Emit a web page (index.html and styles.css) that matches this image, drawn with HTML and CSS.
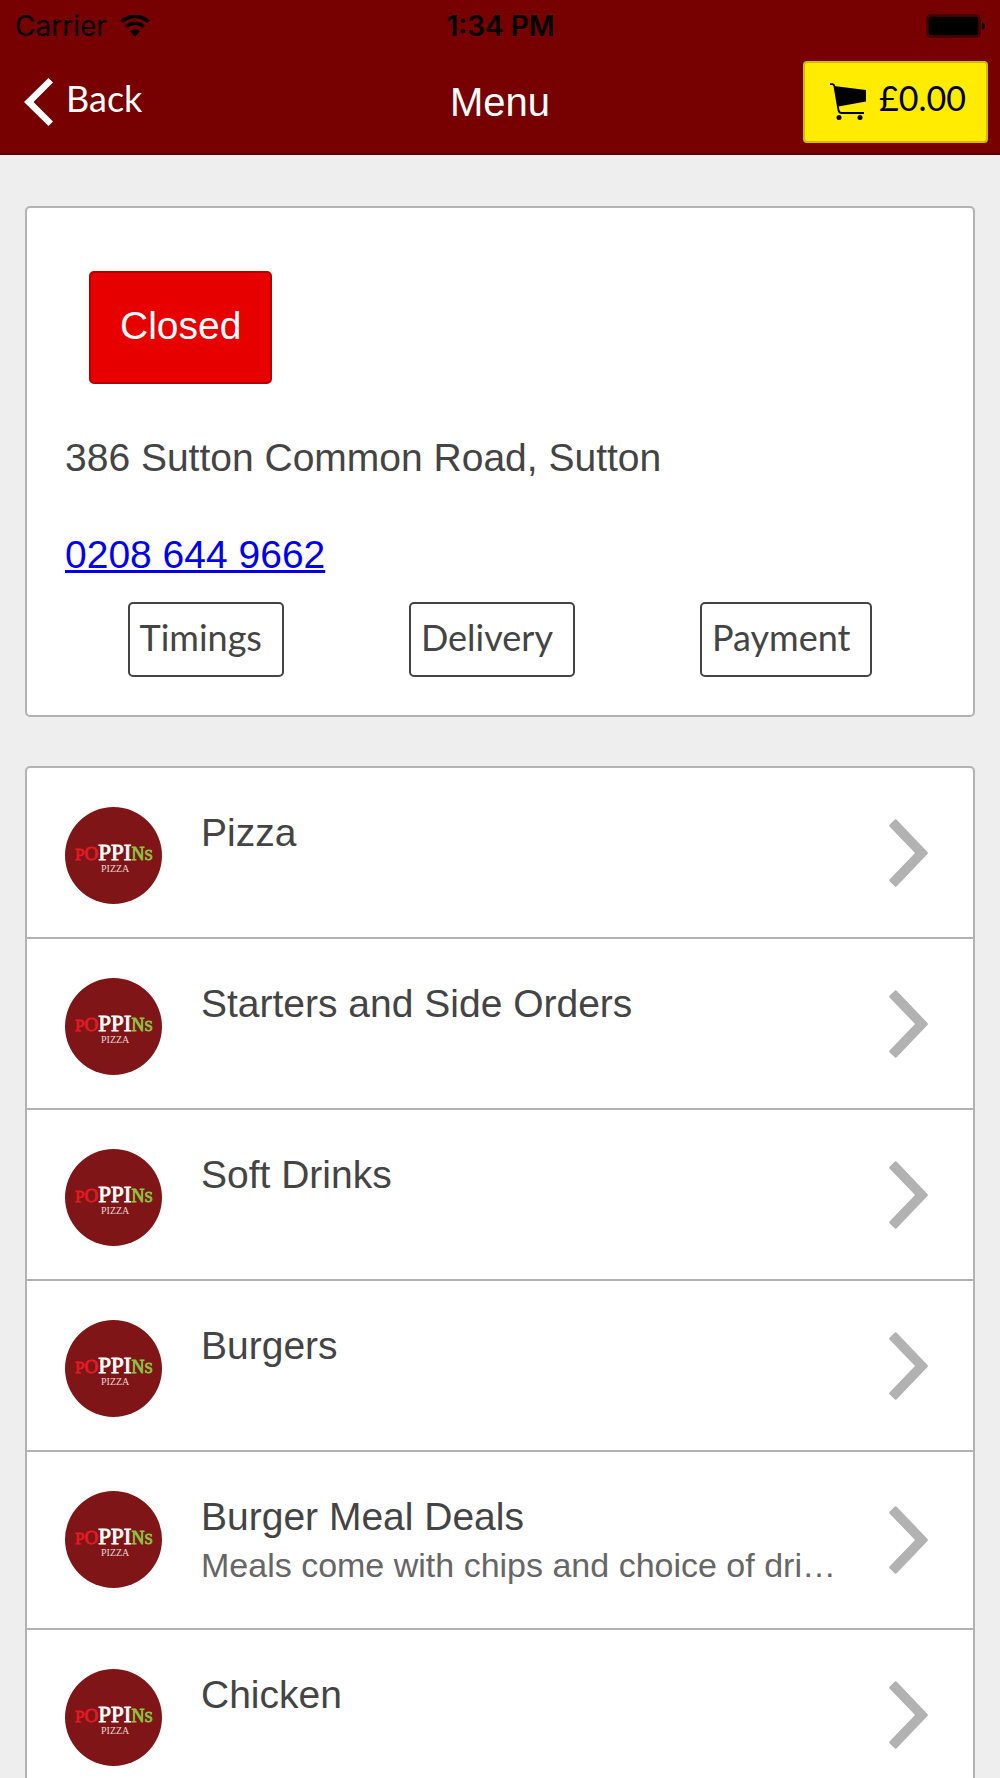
FILE: index.html
```html
<!DOCTYPE html>
<html lang="en">
<head>
  <meta charset="utf-8">
  <meta name="viewport" content="width=device-width, initial-scale=1">
  <title>Menu</title>
  <link rel="stylesheet" href="styles.css">
</head>
<body>
  <svg class="sprite" aria-hidden="true">
    <symbol id="logo" viewBox="0 0 97 97">
      <circle cx="48.5" cy="48.5" r="48.5" fill="#7f1517"/>
      <text x="10" y="53" font-family="Liberation Serif, serif" stroke-width="0.8"><tspan font-size="17" fill="#e31b23" stroke="#e31b23">P</tspan><tspan font-size="19" fill="#e31b23" stroke="#e31b23">O</tspan><tspan font-size="23" fill="#fff" stroke="#fff">PPI</tspan><tspan font-size="18" fill="#8cc63f" stroke="#8cc63f">N</tspan><tspan font-size="15" fill="#8cc63f" stroke="#8cc63f">S</tspan></text>
      <text x="36" y="65" font-family="Liberation Serif, serif" font-size="10" fill="#e8d5d5">PIZZA</text>
    </symbol>
    <symbol id="arrow" viewBox="0 0 39 68">
      <path d="M6.200 0.300Q7 0 7.700 0.700L38.500 33Q39.300 34 38.500 35L7.700 67.300Q7 68 6.200 67.700L0.500 62.200Q-0.200 61.300 0.500 60.500L26 34L0.500 7.500Q-0.200 6.700 0.500 5.800Z" fill="#b2b2b2"/>
    </symbol>
  </svg>

  <header class="header">
    <div class="status_bar">
      <div class="carrier">
        <span>Carrier</span>
        <svg width="30" height="22" viewBox="0 0 30 22" aria-hidden="true">
          <path d="M1.500 6.800A19.500 19.500 0 0 1 28.500 6.800" fill="none" stroke="#000" stroke-width="3.600"/>
          <path d="M6.300 11.800A12.500 12.500 0 0 1 23.700 11.800" fill="none" stroke="#000" stroke-width="3.400"/>
          <path d="M10 16.300A7.200 7.200 0 0 1 20 16.300L15 21.500Z"/>
        </svg>
      </div>
      <div class="time">1:34 PM</div>
      <svg class="battery" width="60" height="24" viewBox="0 0 60 24" aria-hidden="true">
        <rect x="1" y="1" width="53" height="22" rx="4" fill="none" stroke="#3a0000" stroke-width="1.500"/>
        <rect x="2.500" y="2.500" width="50" height="19" rx="2.500"/>
        <path d="M56 8.500Q59 9 59 12Q59 15 56 15.500Z"/>
      </svg>
    </div>
    <nav class="nav">
      <a class="back" href="#">
        <svg width="29" height="48" viewBox="0 0 29 48" aria-hidden="true">
          <path d="M24.500 0L29 4.500L9.500 24L29 43.500L24.500 48L0 24Z" fill="#fff"/>
        </svg>
        <span>Back</span>
      </a>
      <h1 class="title">Menu</h1>
      <button class="cart" type="button">
        <svg width="38" height="37" viewBox="0 0 38 37" aria-hidden="true">
          <path d="M1 1.200H3.500Q5 1.400 5.400 3.200L9.500 27Q10 30 12.500 30H35" fill="none" stroke="#000" stroke-width="1.800"/>
          <path d="M5 3L37 7V18.500L9.500 23.500Z"/>
          <circle cx="10" cy="34.500" r="2.500"/>
          <circle cx="31" cy="34.500" r="2.500"/>
        </svg>
        <span>£0.00</span>
      </button>
    </nav>
  </header>

  <main class="content">
    <section class="card info">
      <button class="closed" type="button">Closed</button>
      <p class="address">386 Sutton Common Road, Sutton</p>
      <p class="phone"><a href="tel:02086449662">0208 644 9662</a></p>
      <div class="tabs">
        <button class="tab" type="button">Timings</button>
        <button class="tab" type="button">Delivery</button>
        <button class="tab" type="button">Payment</button>
      </div>
    </section>

    <section class="card">
      <a class="row" href="#">
        <svg class="logo"><use href="#logo"/></svg>
        <div class="text"><h2>Pizza</h2></div>
        <svg class="arrow"><use href="#arrow"/></svg>
      </a>
      <a class="row" href="#">
        <svg class="logo"><use href="#logo"/></svg>
        <div class="text"><h2>Starters and Side Orders</h2></div>
        <svg class="arrow"><use href="#arrow"/></svg>
      </a>
      <a class="row" href="#">
        <svg class="logo"><use href="#logo"/></svg>
        <div class="text"><h2>Soft Drinks</h2></div>
        <svg class="arrow"><use href="#arrow"/></svg>
      </a>
      <a class="row" href="#">
        <svg class="logo"><use href="#logo"/></svg>
        <div class="text"><h2>Burgers</h2></div>
        <svg class="arrow"><use href="#arrow"/></svg>
      </a>
      <a class="row" href="#">
        <svg class="logo"><use href="#logo"/></svg>
        <div class="text">
          <h2>Burger Meal Deals</h2>
          <p>Meals come with chips and choice of dri…</p>
        </div>
        <svg class="arrow"><use href="#arrow"/></svg>
      </a>
      <a class="row" href="#">
        <svg class="logo"><use href="#logo"/></svg>
        <div class="text"><h2>Chicken</h2></div>
        <svg class="arrow"><use href="#arrow"/></svg>
      </a>
    </section>
  </main>
</body>
</html>
```
FILE: styles.css
```css
*, ::before, ::after {
  box-sizing: border-box;
  margin: 0; padding: 0;
}

body {
  background: #eee;
  color: #444;
  font: 39px/48px "Liberation Sans", Arial, sans-serif;
}
button { cursor: pointer; }
a { text-decoration: none; }
h1, h2 { font-weight: normal; }
.sprite { display: none; }

/* header */
.header {
  background: #700;
  border-bottom: 2px solid #5c0000;
}
.status_bar, .nav {
  display: grid;
  grid-template-columns: 1fr auto 1fr;
  align-items: center;
}
.status_bar {
  height: 52px;
  padding: 0 14px 0 15px;
  color: #000;
  font: 28px/34px Inter, sans-serif;
}
.carrier {
  display: flex;
  align-items: center;
  gap: 13px;
}
.time { font-weight: 600; }
.battery { justify-self: end; }
.nav {
  height: 101px;
  padding: 0 12px 2px;
}
.back {
  display: flex;
  align-items: center;
  gap: 13px;
  padding-left: 12px;
  color: #fff;
}
.back, .cart, .tab {
  font-family: Lato, sans-serif;
  font-size: 36px;
  line-height: 44px;
}
.back span, .cart span { padding-bottom: 7px; }
.title {
  color: #fff;
  font-size: 40px;
}
.cart {
  justify-self: end;
  display: flex;
  align-items: center;
  gap: 12px;
  height: 82px;
  padding: 0 20px 0 24px;
  background: #ffec00;
  border: 2px solid #d0bb00;
  border-radius: 4px;
  color: #000;
  font-size: 34px;
}

/* cards */
.content {
  display: flex;
  flex-direction: column;
  gap: 49px;
  padding: 51px 25px 0;
}
.card {
  background: #fff;
  border: 2px solid #b2b2b2;
  border-radius: 5px;
}
.info { padding: 63px 38px 38px; }
.closed {
  display: block;
  height: 113px;
  margin: 0 0 50px 24px;
  padding: 0 29px 4px;
  background: #e60000;
  border: 2px solid #b40000;
  border-radius: 5px;
  color: #fff;
  font: inherit;
}
.phone { margin: 49px 0 23px; }
.phone a {
  color: #00e;
  text-decoration: underline;
}
.tabs {
  display: flex;
  justify-content: space-around;
}
.tab {
  height: 75px;
  padding: 0 20px 6px 10px;
  background: #fff;
  border: 2px solid #444;
  border-radius: 5px;
  color: #444;
}

/* category list */
.row {
  display: flex;
  align-items: flex-start;
  padding: 39px 45px 33px 38px;
  color: inherit;
}
.row + .row { border-top: 2px solid #b2b2b2; }
.logo {
  flex: none;
  width: 97px; height: 97px;
}
.text {
  flex: 1;
  min-width: 0;
  margin: 0 48px 0 39px;
}
.text h2 {
  font-size: 39px;
  line-height: 52px;
}
.text p {
  overflow: hidden;
  margin-bottom: 8px;
  color: #666;
  font-size: 34px;
  line-height: 44px;
  text-overflow: ellipsis;
  white-space: nowrap;
}
.arrow {
  flex: none;
  align-self: center;
  width: 39px; height: 68px;
  margin-bottom: 6px;
}
```
